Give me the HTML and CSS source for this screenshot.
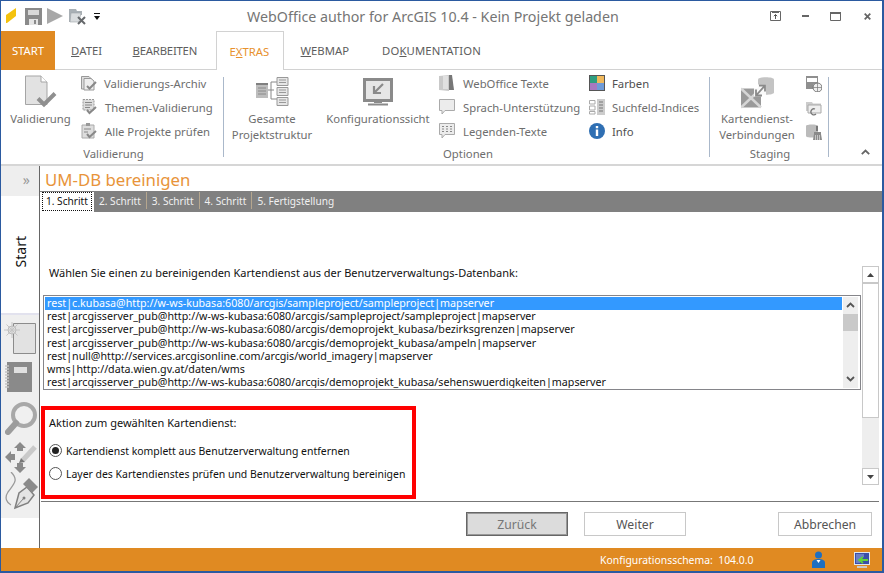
FILE: index.html
```html
<!DOCTYPE html>
<html lang="de">
<head>
<meta charset="utf-8">
<title>WebOffice author for ArcGIS 10.4</title>
<link rel="stylesheet" href="styles.css">
</head>
<body>
<div class="window">
  <header class="titlebar">
    <div class="qat">
      <svg class="qat-pencil" width="11" height="16" viewBox="0 0 11 16"><path d="M10 0 V8 L1 15 H0 V7 Z" fill="#f4c20d"/></svg>
      <svg class="qat-save" width="17" height="17" viewBox="0 0 17 17"><path d="M0 0H17V17H0Z" fill="#8a8a8a"/><path d="M3 2H14V7H3Z" fill="#d8d8d8"/><path d="M4 11H13V17H4Z" fill="#e4e4e4"/><path d="M9 12H11V16H9Z" fill="#8a8a8a"/></svg>
      <svg class="qat-play" width="16" height="16" viewBox="0 0 16 16"><path d="M0 0 L16 8 L0 16Z" fill="#a8a8a8"/></svg>
      <svg class="qat-folder" width="17" height="17" viewBox="0 0 17 17"><path d="M0 1H7L8 3H13V7H8L6 14H0Z" fill="#a9b0b5"/><path d="M2 5H12L10 14H1Z" fill="#d9dcde" stroke="#a0a5a9" stroke-width=".6"/><path d="M9 9 L16 16 M16 9 L9 16" stroke="#66696c" stroke-width="2"/></svg>
      <svg class="qat-drop" width="6" height="7" viewBox="0 0 6 7"><path d="M0 0H6V1H0Z M0 3H6L3 7Z" fill="#111"/></svg>
    </div>
    <div class="app-title">WebOffice author for ArcGIS 10.4 - Kein Projekt geladen</div>
    <div class="controls">
      <svg width="11" height="10" viewBox="0 0 11 10"><path d="M.5.5H10.5V9.5H.5Z M2 1.5H9" fill="none" stroke="#666"/><path d="M5.5 8V3.5 M3.8 5.2 L5.5 3.5 L7.2 5.2" fill="none" stroke="#555"/></svg>
      <svg class="ctl-min" width="7" height="2" viewBox="0 0 7 2"><path d="M0 0H7V2H0Z" fill="#666"/></svg>
      <svg class="ctl-max" width="11" height="9" viewBox="0 0 11 9"><path d="M.5.5H10.5V8.5H.5Z" fill="none" stroke="#666"/><path d="M0 0H11V2H0Z" fill="#666"/></svg>
      <svg class="ctl-close" width="7" height="7" viewBox="0 0 7 7"><path d="M.7.7 L6.3 6.3 M6.3.7 L.7 6.3" stroke="#666" stroke-width="1.8"/></svg>
    </div>
  </header>

  <nav class="tabs">
    <div class="tab tab-start">START</div>
    <div class="tab"><u>D</u>ATEI</div>
    <div class="tab tab-bear"><u>B</u>EARBEITEN</div>
    <div class="tab tab-active">E<u>X</u>TRAS</div>
    <div class="tab tab-web"><u>W</u>EBMAP</div>
    <div class="tab tab-dok">DO<u>K</u>UMENTATION</div>
  </nav>

  <section class="ribbon">
    <div class="group group-val">
      <div class="group-body">
        <div class="big big-val">
          <svg class="big-icon" width="32" height="33" viewBox="0 0 32 33"><path d="M.5.5H16L22 6.5V29H.5Z" fill="#e2e2e2" stroke="#a5a5a5"/><path d="M16 .5V6.5H22" fill="#fff" stroke="#a5a5a5"/><path d="M13 23 L19 29 L30 18" fill="none" stroke="#8f8f8f" stroke-width="4"/></svg>
          <span>Validierung</span>
        </div>
        <div class="small-list list-val">
          <div class="small"><svg width="16" height="16" viewBox="0 0 16 16"><path d="M.5 1.5H8L11 4.500V14H.5Z" fill="#ddd" stroke="#999"/><path d="M3 3.500H10L13 6V15H3Z" fill="#eee" stroke="#999"/><path d="M6 11 L8.500 13.500 L15 7" fill="none" stroke="#888" stroke-width="2"/></svg><span>Validierungs-Archiv</span></div>
          <div class="small"><svg width="16" height="16" viewBox="0 0 16 16"><path d="M2 .5H13V11H2Z" fill="#ddd" stroke="#999" stroke-dasharray="2 1"/><path d="M4 3.500H11M4 6H11M4 8.500H9" stroke="#888"/><path d="M6 11 L8.500 14 L15 8" fill="none" stroke="#888" stroke-width="2"/></svg><span class="sp">Themen-Validierung</span></div>
          <div class="small"><svg width="16" height="16" viewBox="0 0 16 16"><path d="M1 2H13V15H1Z" fill="#ddd" stroke="#aaa"/><path d="M5 0H9V3H5Z" fill="#999"/><path d="M3 6H10M3 9H7" stroke="#888"/><path d="M6 11 L8.500 14 L15 8" fill="none" stroke="#888" stroke-width="2"/></svg><span class="sp">Alle Projekte prüfen</span></div>
        </div>
      </div>
      <div class="group-label">Validierung</div>
    </div>

    <div class="group group-opt">
      <div class="group-body">
        <div class="big big-ges">
          <svg class="big-icon" width="33" height="30" viewBox="0 0 33 30"><path d="M0 6H12V21H0Z" fill="#bdbdbd"/><path d="M0 6H12V8H0Z" fill="#808080"/><path d="M2 11H10M2 14H10M2 17H10" stroke="#8a8a8a"/><path d="M12 13H18M15 5V22M15 5H21M15 22H21" fill="none" stroke="#888"/><path d="M21 .5H32V8.500H21ZM21 10.500H32V18.500H21ZM21 20.500H32V28.500H21Z" fill="#e6e6e6" stroke="#999"/><path d="M23 3H30M23 5.500H30M23 13H30M23 15.500H30M23 23H30M23 25.500H30" stroke="#999"/></svg>
          <span>Gesamte<br>Projektstruktur</span>
        </div>
        <div class="big big-kon">
          <svg class="big-icon" width="30" height="28" viewBox="0 0 30 28"><path d="M1.500 1.500H28.500V22.500H1.500Z" fill="#e6e6e6" stroke="#8a8a8a" stroke-width="3"/><path d="M11 23H19V25H11ZM5 25.500H25V27.500H5Z" fill="#8a8a8a"/><path d="M20 6 L12 14 M11 8V15H18" fill="none" stroke="#8a8a8a" stroke-width="2.200"/></svg>
          <span>Konfigurationssicht</span>
        </div>
        <div class="small-list list-opt1">
          <div class="small"><svg width="16" height="16" viewBox="0 0 16 16"><path d="M0 1 L10 0 V16 L0 15Z" fill="#c9c9c9"/><path d="M10 0H13L15 15H10Z" fill="#777"/><path d="M4 1H9V14H4Z" fill="#e0e0e0"/></svg><span class="sp">WebOffice Texte</span></div>
          <div class="small"><svg width="16" height="16" viewBox="0 0 16 16"><path d="M.5 .5H15.500V11.500H6L3 15V11.500H.5Z" fill="#ececec" stroke="#aaa"/></svg><span class="sp">Sprach-Unterstützung</span></div>
          <div class="small"><svg width="16" height="16" viewBox="0 0 16 16"><path d="M.5 .5H15.500V11.500H6L3 15V11.500H.5Z" fill="#ececec" stroke="#aaa"/><path d="M3 3.500H5M7 3.500H9M11 3.500H13M3 6H5M7 6H9M11 6H13M3 8.500H5M7 8.500H9M11 8.500H13" stroke="#888"/></svg><span class="sp">Legenden-Texte</span></div>
        </div>
        <div class="small-list list-opt2">
          <div class="small strong"><svg width="16" height="16" viewBox="0 0 16 16"><path d="M0 0H16V16H0Z" fill="#555"/><path d="M1 1H8V8H1Z" fill="#2f9e7f"/><path d="M8 1H15V8H8Z" fill="#f1b95c"/><path d="M1 8H8V15H1Z" fill="#a878c0"/><path d="M8 8H15V15H8Z" fill="#6f9bd8"/></svg><span>Farben</span></div>
          <div class="small"><svg width="16" height="16" viewBox="0 0 16 16"><path d="M.5 1.500H6V5H.5ZM.5 7H6V11H.5ZM.5 12.500H6V15H.5Z" fill="none" stroke="#aaa"/><path d="M8 0H16V16H8Z" fill="#ccc"/><path d="M10 3H14M10 6H14M10 9H14M10 12H14" stroke="#777"/></svg><span>Suchfeld-Indices</span></div>
          <div class="small strong"><svg width="16" height="16" viewBox="0 0 16 16"><circle cx="8" cy="8" r="8" fill="#2f6fb3"/><path d="M6.800 6.500H9.200V13H6.800ZM6.800 3H9.200V5.200H6.800Z" fill="#fff"/></svg><span>Info</span></div>
        </div>
      </div>
      <div class="group-label">Optionen</div>
    </div>

    <div class="group group-sta">
      <div class="group-body">
        <div class="big big-kar">
          <svg class="big-icon" width="33" height="33" viewBox="0 0 33 33"><path d="M17 4C17 1 33 1 33 4V17C33 20 17 20 17 17Z" fill="#c4c4c4"/><path d="M0 13H20V32H0Z" fill="#9a9a9a"/><path d="M0 13L20 32M20 13L0 32" stroke="#d6d6d6" stroke-width="2.500"/><path d="M13 9H25V21H13Z" fill="#fff" opacity=".9"/><path d="M15 20L24 10M18 10H24V16M15 14V20H21" fill="none" stroke="#8a8a8a" stroke-width="1.800"/></svg>
          <span>Kartendienst-<br>Verbindungen</span>
        </div>
        <div class="small-list list-sta">
          <svg width="16" height="16" viewBox="0 0 16 16"><path d="M0 0H12V13H0Z" fill="#8f8f8f"/><path d="M1 2H11V6H1Z" fill="#fff"/><circle cx="11.500" cy="11.500" r="4.500" fill="#eee" stroke="#777"/><path d="M7 11.500H16M11.500 7V16" stroke="#777" stroke-width=".7"/></svg>
          <svg width="16" height="16" viewBox="0 0 16 16"><path d="M0 2H6L7 3.500H15V11H0Z" fill="#ccc"/><path d="M2 5H15V13H2Z" fill="#eee" stroke="#aaa"/><path d="M9 9A3 3 0 1 0 10 14" fill="none" stroke="#777" stroke-width="1.300"/></svg>
          <svg width="16" height="16" viewBox="0 0 16 16"><path d="M0 2C0 0 12 0 12 2V12C12 14 0 14 0 12Z" fill="#bbb"/><path d="M10 0H12V5H10Z" transform="translate(0 2)" fill="#777"/><path d="M8 8H15V10H8ZM8 10H15L16 16H7Z" fill="#8a8a8a"/><path d="M9.500 11V16M11.500 11V16M13.500 11V16" stroke="#eee" stroke-width=".6"/></svg>
        </div>
      </div>
      <div class="group-label">Staging</div>
    </div>

    <div class="collapse"><svg width="9" height="6" viewBox="0 0 9 6"><path d="M.8 5.200 L4.500 1.500 L8.200 5.200" fill="none" stroke="#666" stroke-width="1.800"/></svg></div>
  </section>

  <main class="main">
    <aside class="sidebar">
      <div class="side-toggle">»</div>
      <div class="side-start"><span>Start</span></div>
      <div class="side-icons">
        <svg class="si-page" width="32" height="33" viewBox="0 0 32 33"><path d="M9.500 1.500H31.500V31.500H9.500Z" fill="#e2e2e2" stroke="#8c8c8c"/><circle cx="8" cy="8" r="4" fill="#e0e0e0" stroke="#bbb"/><path d="M8 0V16M0 8H16M2.500 2.500L13.500 13.500M13.500 2.500L2.500 13.500" stroke="#c4c4c4"/></svg>
        <svg class="si-book" width="27" height="30" viewBox="0 0 27 30"><path d="M2 0H27V30H2Z" fill="#8a8a8a"/><path d="M9 5H22V11H9Z" fill="#e0e0e0"/><path d="M0 4H4M0 7H4M0 10H4M0 13H4M0 16H4M0 19H4M0 22H4M0 25H4" stroke="#c4c4c4" stroke-width="1.500"/></svg>
        <svg class="si-mag" width="32" height="33" viewBox="0 0 32 33"><circle cx="19" cy="13" r="11" fill="#f0f0f0" stroke="#a8a8a8" stroke-width="4"/><path d="M11 21 L3 30" stroke="#9c9c9c" stroke-width="6" stroke-linecap="round"/></svg>
        <svg class="si-move" width="32" height="32" viewBox="0 0 32 32"><path d="M15 0 L21 6 H9Z M12 6H18V9H12Z M0 15 L6 9 V21Z M6 12H10V18H6Z M12 21H18V25H12Z M9 25 H21 L15 31Z" fill="#8a8a8a"/><path d="M18 18 L30 5" stroke="#c9c9c9" stroke-width="5"/><path d="M14 21 L16 16 L20 20Z" fill="#777"/></svg>
        <svg class="si-pen" width="33" height="41" viewBox="0 0 33 41"><path d="M6 0C14 8 9 12 3 20C-1 26 2 31 6 33" fill="none" stroke="#9a9a9a" stroke-width="1.300"/><path d="M10 36 L14 21 L22 15 L29 23 L23 31Z" fill="#e4e4e4" stroke="#808080" stroke-width="1.500"/><path d="M10 36 L19 26" stroke="#808080"/><circle cx="19" cy="26" r="1.500" fill="#808080"/><path d="M24 6 L33 15 L27 21 L18 12Z" fill="#8a8a8a"/></svg>
      </div>
    </aside>

    <div class="content">
      <h1 class="page-title">UM-DB bereinigen</h1>
      <div class="steps">
        <div class="step step-active"><span>1. Schritt</span></div>
        <div class="step">2. Schritt</div>
        <div class="step">3. Schritt</div>
        <div class="step">4. Schritt</div>
        <div class="step step-last">5. Fertigstellung</div>
      </div>

      <div class="body">
        <div class="form">
          <p class="lead">Wählen Sie einen zu bereinigenden Kartendienst aus der Benutzerverwaltungs-Datenbank:</p>
          <div class="listbox">
            <ul class="rows">
              <li class="row-sel">rest|c.kubasa@http://w-ws-kubasa:6080/arcgis/sampleproject/sampleproject|mapserver</li>
              <li>rest|arcgisserver_pub@http://w-ws-kubasa:6080/arcgis/sampleproject/sampleproject|mapserver</li>
              <li>rest|arcgisserver_pub@http://w-ws-kubasa:6080/arcgis/demoprojekt_kubasa/bezirksgrenzen|mapserver</li>
              <li>rest|arcgisserver_pub@http://w-ws-kubasa:6080/arcgis/demoprojekt_kubasa/ampeln|mapserver</li>
              <li>rest|null@http://services.arcgisonline.com/arcgis/world_imagery|mapserver</li>
              <li>wms|http://data.wien.gv.at/daten/wms</li>
              <li>rest|arcgisserver_pub@http://w-ws-kubasa:6080/arcgis/demoprojekt_kubasa/sehenswuerdigkeiten|mapserver</li>
            </ul>
            <div class="list-scroll">
              <svg width="9" height="6" viewBox="0 0 9 6"><path d="M1 5 L4.500 1.500 L8 5" fill="none" stroke="#555" stroke-width="1.800"/></svg>
              <div class="list-thumb"></div>
              <svg width="9" height="6" viewBox="0 0 9 6"><path d="M1 1 L4.500 4.500 L8 1" fill="none" stroke="#555" stroke-width="1.800"/></svg>
            </div>
          </div>
          <div class="action">
            <p class="action-title">Aktion zum gewählten Kartendienst:</p>
            <label class="radio-row"><span class="radio radio-on"></span>Kartendienst komplett aus Benutzerverwaltung entfernen</label>
            <label class="radio-row"><span class="radio"></span>Layer des Kartendienstes prüfen und Benutzerverwaltung bereinigen</label>
          </div>
        </div>
        <div class="scroll">
          <div class="scroll-btn"><svg width="7" height="4" viewBox="0 0 7 4"><path d="M3.500 0 L7 4H0Z" fill="#444"/></svg></div>
          <div class="scroll-thumb"></div>
          <div class="scroll-track"></div>
          <div class="scroll-btn"><svg width="7" height="4" viewBox="0 0 7 4"><path d="M0 0H7L3.500 4Z" fill="#444"/></svg></div>
        </div>
      </div>

      <div class="footer">
        <button class="btn btn-off">Zurück</button>
        <button class="btn btn-next">Weiter</button>
        <button class="btn btn-cancel">Abbrechen</button>
      </div>
    </div>
  </main>

  <footer class="status">
    <span class="schema">Konfigurationsschema:&nbsp; 104.0.0</span>
    <svg class="st-user" width="13" height="17" viewBox="0 0 13 17"><circle cx="6.500" cy="4" r="3.500" fill="#1f6fc0"/><path d="M0 17V12C0 9 3 8 6.500 8S13 9 13 12V17Z" fill="#1f6fc0"/><path d="M4.500 9H8.500L6.500 12Z" fill="#fff"/></svg>
    <svg class="st-mon" width="16" height="16" viewBox="0 0 16 16"><path d="M0 0H16V13H0Z" fill="#dfe6ee"/><path d="M1 1H15V12H1Z" fill="#3a4fa8"/><path d="M3 2V11M5 2V11M7 2V7M9 2V5" stroke="#9db0e0"/><path d="M5 8H14M9 5L5 8L9 11" fill="none" stroke="#5fd23c" stroke-width="1.800"/><path d="M3 14H13V16H3Z" fill="#ccc"/></svg>
  </footer>
</div>
</body>
</html>
```

FILE: styles.css
```css
* { box-sizing: border-box; }
html, body { margin: 0; padding: 0; background: #fff; }
body { font-family: "Noto Sans", "Open Sans", sans-serif; font-size: 11.3px; }

.window {
  width: 884px; height: 573px; display: flex; flex-direction: column; overflow: hidden;
  border-style: solid; border-color: #2b5aa0; border-width: 1px 2px 2px 1px; background: #fff;
}

/* title bar */
.titlebar { height: 30px; flex: none; display: flex; align-items: center; }
.qat { width: 246px; display: flex; align-items: center; padding-left: 5px; flex: none; }
.qat-save { margin-left: 8px; }
.qat-play { margin-left: 5px; }
.qat-folder { margin-left: 6px; }
.qat-drop { margin-left: 8px; }
.app-title { font-size: 14.25px; color: #757575; white-space: nowrap; }
.controls { margin-left: auto; display: flex; align-items: center; padding-right: 11px; }
.ctl-min { margin-left: 21px; }
.ctl-max { margin-left: 21px; }
.ctl-close { margin-left: 23px; }

/* tabs */
.tabs { height: 39px; flex: none; display: flex; color: #5d5d5d; position: relative; z-index: 1; }
.tab { display: flex; align-items: center; padding: 0 15.5px; white-space: nowrap; flex: none; }
.tab:nth-child(2) { padding-left: 16px; }
.tab-start { width: 54px; padding: 0; justify-content: center; background: #e08a22; color: #fff; }
.tab-bear { letter-spacing: -.2px; width: 83px; padding: 0; margin-left: 15px; }
.tab-active { color: #e8912d; background: #fff; border: 1px solid #d2d2d2; border-bottom: 0; padding: 0 13px; height: 39px; width: 68px; }
.tab-web { padding-left: 17px; }
.tab-dok { letter-spacing: .15px; margin-left: 2px; }

/* ribbon */
.ribbon {
  height: 97px; flex: none; margin-top: -1px; display: flex;
  border-top: 1px solid #d2d2d2; border-bottom: 2px solid #d6d6d6; padding-top: 2px; color: #6e6e6e;
}
.group { display: flex; flex-direction: column; height: 90px; flex: none; position: relative; }
.group::after { content: ""; position: absolute; right: 0; top: 5px; width: 1px; height: 80px; background: #aab8ca; }
.group-val { width: 223px; padding-left: 2px; }
.group-opt { width: 486px; padding-left: 2px; }
.group-sta { width: 119px; padding-left: 1px; }
.group-body { display: flex; height: 74px; flex: none; }
.group-label { text-align: center; line-height: 16px; }
.big { display: flex; flex-direction: column; align-items: center; text-align: center; line-height: 16px; flex: none; white-space: nowrap; padding-top: 3px; }
.big-icon { height: 34px; flex: none; margin-bottom: 2px; }
.big-val { width: 75px; }
.big-ges { width: 92px; }
.big-kon { width: 120px; }
.big-kar { width: 92px; }
.small-list { display: flex; flex-direction: column; flex: none; margin-top: -1px; }
.small { height: 24px; flex: none; display: flex; align-items: center; white-space: nowrap; }
.small svg { flex: none; margin-right: 7px; }
.small .sp { margin-left: 1px; }
.strong { color: #505050; }
.list-val { width: 140px; margin-left: 3px; }
.list-opt1 { width: 150px; margin-left: 1px; }
.list-opt2 { width: 120px; }
.list-sta { margin: 4px 0 0 3px; gap: 8px; }
.collapse { flex: 1; display: flex; align-items: flex-end; justify-content: center; padding: 0 0 7px 20px; height: 90px; }

/* main */
.main { flex: 1; min-height: 0; display: flex; }
.sidebar { width: 39px; flex: none; border-right: 1px solid #666; display: flex; flex-direction: column; }
.side-toggle { height: 30px; background: #eee; color: #999; text-align: right; padding-right: 9px; font-size: 14px; line-height: 27px; }
.side-start { height: 119px; display: flex; align-items: center; justify-content: center; color: #111; border-bottom: 2px solid #e2e2ee; }
.side-start span { writing-mode: vertical-rl; transform: rotate(180deg); font-size: 14px; margin-top: -5px; }
.side-icons { height: 203px; background: #efefef; display: flex; flex-direction: column; align-items: flex-start; padding: 7px 0 0 3px; }
.side-icons svg { flex: none; }
.si-book { margin: 7px 0 0 1px; }
.si-mag { margin: 10px 0 0 1px; }
.si-move { margin: 7px 0 0 1px; }
.si-pen { margin: -2px 0 0 1px; }

.content { flex: 1; min-width: 0; display: flex; flex-direction: column; }
.page-title { margin: 0; height: 25px; font-size: 16.8px; font-weight: 400; color: #e8943a; padding-left: 5px; line-height: 27px; }
.steps { height: 21px; flex: none; background: #808080; display: flex; font-size: 10.1px; color: #f0f0f0; padding-top: 1px; }
.step { padding: 0 5px; display: flex; align-items: center; border-right: 1px solid #b5a68e; height: 17px; margin-top: 0; white-space: nowrap; }
.step-last { border-right: 0; }
.step-active { background: #fff; color: #111; height: 20px; width: 54px; padding: 0 0 2px 2px; border: 0; align-items: flex-start; }
.step-active span { border: 1px dotted #111; padding: 0 3px; line-height: 17px; }

.body { flex: 1; min-height: 0; display: flex; }
.form { width: 822px; flex: none; padding-left: 1px; }
.lead { margin: 0; padding: 53px 0 0 8px; height: 83px; font-size: 11px; color: #111; line-height: 15px; white-space: nowrap; }
.listbox { margin-left: 2px; width: 818px; height: 95px; border: 1px solid #85858a; display: flex; padding: 1px; }
.rows { list-style: none; margin: 0; padding: 0; flex: 1; font-size: 10.7px; line-height: 13.2px; color: #111; white-space: nowrap; overflow: hidden; }
.rows li { padding-left: 2px; }
.row-sel { background: #3399ff; color: #fff; }
.list-scroll { width: 15px; background: #eee; margin: 0 1px; display: flex; flex-direction: column; align-items: center; padding-top: 5px; }
.list-thumb { width: 15px; height: 17px; background: #c9c9c9; margin-top: 6px; margin-bottom: auto; }
.list-scroll svg:last-child { margin-bottom: 6px; }
.action { margin-top: 16px; width: 375px; height: 93px; border: 4px solid #f00; padding: 5px 0 0 4px; font-size: 10.45px; color: #111; }
.action-title { margin: 0 0 8px 0; line-height: 16px; font-size: 11px; }
.radio-row { display: flex; align-items: center; height: 23px; white-space: nowrap; }
.radio { width: 13px; height: 13px; border: 1px solid #555; border-radius: 50%; margin-right: 4px; flex: none; background: #fff; display: flex; align-items: center; justify-content: center; }
.radio-on::after { content: ""; width: 7px; height: 7px; border-radius: 50%; background: #222; }

.scroll { width: 17px; height: 219px; margin-top: 54px; display: flex; flex-direction: column; background: #eee; }
.scroll-btn { height: 17px; flex: none; background: #fff; border: 1px solid #c8c8c8; display: flex; align-items: center; justify-content: center; }
.scroll-thumb { height: 135px; flex: none; background: #fff; border: 1px solid #c8c8c8; }
.scroll-track { flex: 1; }

.footer { height: 47px; flex: none; margin: 0 3px 0 1px; border-top: 1px solid #777; display: flex; align-items: flex-start; padding-top: 10px; }
.btn { height: 24px; width: 102px; font: inherit; font-size: 12.2px; background: #fff; color: #555; border: 1px solid #c8c8c8; padding: 0; }
.btn-off { margin-left: 425px; background: #dcdcdc; border: 1px solid #666; color: #777; box-shadow: inset 0 0 0 1px #999; }
.btn-next { margin-left: 16px; }
.btn-cancel { margin-left: 92px; width: 94px; }

.status { height: 23px; flex: none; background: #e08a22; color: #fff; display: flex; align-items: center; font-size: 10.4px; padding-left: 599px; }
.schema { width: 154px; white-space: nowrap; }
.st-user { margin-left: 58px; }
.st-mon { margin-left: 29px; }
```
